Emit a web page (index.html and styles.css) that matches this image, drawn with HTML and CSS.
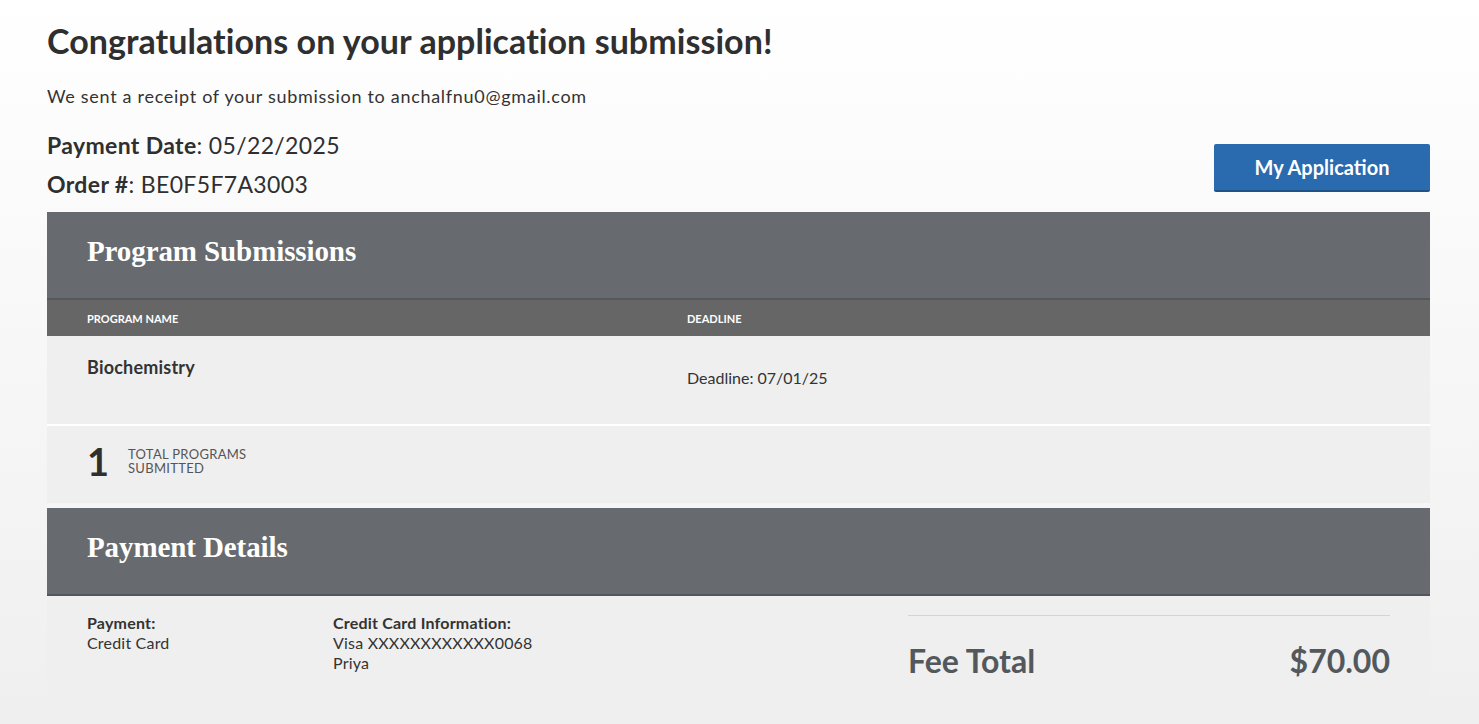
FILE: index.html
```html
<!DOCTYPE html>
<html lang="en">
<head>
  <meta charset="UTF-8">
  <meta name="viewport" content="width=device-width, initial-scale=1.0">
  <title>Submission Confirmation</title>
  <link rel="stylesheet" href="styles.css">
</head>
<body>
  <div class="page">
    <h1>Congratulations on your application submission!</h1>
    <p class="receipt">We sent a receipt of your submission to anchalfnu0@gmail.com</p>

    <div class="order-bar">
      <div class="order-info">
        <p><b>Payment Date</b>: 05/22/2025</p>
        <p><b>Order #</b>: BE0F5F7A3003</p>
      </div>
      <button class="btn-primary">My Application</button>
    </div>

    <div class="section">
      <div class="section-head">
        <h2>Program Submissions</h2>
      </div>
      <div class="table-head">
        <span class="col-name">Program Name</span>
        <span class="col-deadline">Deadline</span>
      </div>
      <div class="table-row">
        <span class="col-name program">Biochemistry</span>
        <span class="col-deadline deadline">Deadline: 07/01/25</span>
      </div>
      <div class="total-row">
        <span class="total-count">1</span>
        <span class="total-label">Total Programs<br>Submitted</span>
      </div>
    </div>

    <div class="section">
      <div class="section-head">
        <h2>Payment Details</h2>
      </div>
      <div class="payment-body">
        <div class="pay-col pay-method">
          <b>Payment:</b>
          <span>Credit Card</span>
        </div>
        <div class="pay-col pay-card">
          <b>Credit Card Information:</b>
          <span>Visa XXXXXXXXXXXX0068</span>
          <span>Priya</span>
        </div>
        <div class="fee">
          <span>Fee Total</span>
          <span>$70.00</span>
        </div>
      </div>
    </div>
  </div>
</body>
</html>
```

FILE: styles.css
```css
html {
  min-height: 100%;
  background: linear-gradient(#ffffff, #efefef);
}
body {
  margin: 0;
  font-family: Lato, "Noto Sans", sans-serif;
  color: #333;
}
.page {
  width: 1383px;
  margin-left: 47px;
  padding-top: 20px;
}
h1 {
  margin: 0;
  font-size: 34px;
  font-weight: 700;
  line-height: 42px;
  color: #2f2f2f;
  letter-spacing: 0.05px;
}
.receipt {
  margin: 23px 0 0;
  font-size: 18px;
  line-height: 22px;
  color: #333;
  letter-spacing: 0.7px;
}
.order-bar {
  display: flex;
  justify-content: space-between;
  align-items: flex-end;
  margin-top: 19px;
  padding-bottom: 8px;
}
.order-info p {
  margin: 0;
  font-size: 23px;
  line-height: 39px;
  color: #2f2f2f;
  letter-spacing: 0.35px;
}
.order-info b {
  font-weight: 700;
}
.btn-primary {
  width: 216px;
  height: 48px;
  margin-bottom: 12px;
  background-color: #2a6aae;
  border: none;
  border-bottom: 2px solid #1f5287;
  border-radius: 2px;
  color: white;
  font-family: Lato, sans-serif;
  font-weight: 700;
  font-size: 20px;
  cursor: pointer;
}
.section-head {
  height: 88px;
  box-sizing: border-box;
  padding: 0 0 7px 40px;
  background-color: #676b6f;
  border-bottom: 2px solid #54585c;
  display: flex;
  align-items: center;
}
.section-head h2 {
  margin: 0;
  font-family: "Liberation Serif", serif;
  font-weight: 700;
  font-size: 29px;
  color: #fff;
  letter-spacing: -0.1px;
}
.table-head {
  display: flex;
  height: 36px;
  align-items: center;
  background-color: #666;
  color: #fff;
  font-size: 11px;
  font-weight: 700;
  text-transform: uppercase;
}
.col-name {
  width: 600px;
  padding-left: 40px;
}
.table-row {
  display: flex;
  height: 88px;
  background-color: #efefef;
  border-bottom: 2px solid #fff;
}
.program {
  font-size: 18px;
  font-weight: 700;
  padding-top: 20px;
  letter-spacing: 0.2px;
}
.deadline {
  font-size: 16px;
  padding-top: 32px;
}
.total-row {
  display: flex;
  align-items: center;
  height: 77px;
  padding-left: 40px;
  background-color: #efefef;
  border-bottom: 5px solid #f6f6f6;
}
.total-count {
  font-size: 38px;
  font-weight: 700;
  color: #2f2f2f;
  width: 41px;
  margin-top: -7px;
}
.total-label {
  font-size: 13px;
  line-height: 14px;
  text-transform: uppercase;
  color: #555;
  margin-top: -8px;
  letter-spacing: 0.3px;
}
.payment-body {
  display: flex;
  height: 102px;
  background-color: #efefef;
  padding-left: 40px;
  padding-right: 40px;
}
.pay-col {
  display: flex;
  flex-direction: column;
  padding-top: 17px;
  font-size: 16px;
  line-height: 20px;
  letter-spacing: 0.2px;
}
.pay-method {
  width: 246px;
}
.pay-card {
  flex: 1;
}
.fee {
  width: 482px;
  margin-top: 19px;
  border-top: 1px solid #d5d5d5;
  display: flex;
  justify-content: space-between;
  align-items: center;
  height: 82px;
  padding-top: 8px;
  box-sizing: border-box;
  font-size: 32px;
  font-weight: 700;
  color: #53585d;
}
```
